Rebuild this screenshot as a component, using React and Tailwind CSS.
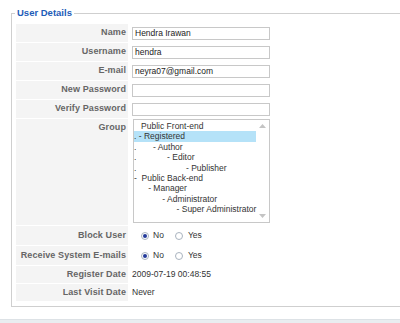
import React from 'react';

const groups = [
    { text: 'Public Front-end', pre: '   ' },
    { text: '- Registered', pre: '. ', active: true },
    { text: '- Author', pre: '.       ' },
    { text: '- Editor', pre: '.             ' },
    { text: '- Publisher', pre: '.                     ' },
    { text: 'Public Back-end', pre: '-  ' },
    { text: '- Manager', pre: '      ' },
    { text: '- Administrator', pre: '            ' },
    { text: '- Super Administrator', pre: '                  ' },
];

function Label({ children, top }) {
    return (
        <div
            className={`w-[112px] shrink-0 bg-[#f4f4f4] pr-[2px] text-right font-bold text-[9px] tracking-[0.1px] text-[#666] flex justify-end ${top ? 'items-start pt-[2px]' : 'items-center'}`}
        >
            {children}
        </div>
    );
}

function TextInput({ value }) {
    return (
        <div className="w-[138px] h-[13px] border border-[#c8c8c8] bg-white px-[2px] text-[8.5px] leading-[11px] text-[#222]">
            {value}
        </div>
    );
}

function Radio({ checked }) {
    return (
        <span className="w-[8px] h-[8px] rounded-full border border-[#a9b3bf] bg-white flex items-center justify-center">
            {checked && <span className="w-[4px] h-[4px] rounded-full bg-[#233a9a]" />}
        </span>
    );
}

function RadioPair() {
    return (
        <div className="flex items-center text-[8.5px] text-[#333] pl-[9px]">
            <Radio checked />
            <span className="ml-[4px]">No</span>
            <span className="ml-[11px]"><Radio /></span>
            <span className="ml-[5px]">Yes</span>
        </div>
    );
}

function Row({ label, h, top, children }) {
    return (
        <div className={`flex ${h}`}>
            <Label top={top}>{label}</Label>
            <div className={`flex pl-[4px] ${top ? 'items-start' : 'items-center'}`}>{children}</div>
        </div>
    );
}

export default function App() {
    return (
        <div className="w-[400px] h-[323px] bg-white overflow-hidden relative" style={{ fontFamily: '"Liberation Sans", Arial, sans-serif' }}>
            <div className="pt-[13px] pl-[11px]">
                {/* Fieldset box */}
                <div className="relative w-[400px] h-[294px] border-l border-t border-b border-[#cfcfcf] pl-[4px] pt-[10px]">
                    <div className="absolute -top-[7px] left-[3px] bg-white px-[2px] text-[9.5px] font-bold leading-[12px] text-[#1d5cb8]">
                        User Details
                    </div>

                    <div className="flex flex-col gap-[1px]">
                        <Row label="Name" h="h-[18px]"><TextInput value="Hendra Irawan" /></Row>
                        <Row label="Username" h="h-[18px]"><TextInput value="hendra" /></Row>
                        <Row label="E-mail" h="h-[18px]"><TextInput value="neyra07@gmail.com" /></Row>
                        <Row label="New Password" h="h-[18px]"><TextInput value="" /></Row>
                        <Row label="Verify Password" h="h-[18px]"><TextInput value="" /></Row>
                        <Row label="Group" h="h-[106px]" top>
                            <div className="ml-[1px] w-[137px] h-[104px] border border-[#c8c8c8] bg-white flex">
                                <div className="flex-1 pt-[1px] text-[8.5px] leading-[10.4px] text-[#333]">
                                    {groups.map((g) => (
                                        <div key={g.text} className={`whitespace-pre w-[122px] ${g.active ? 'bg-[#b5e2f8]' : ''}`}>
                                            {g.pre}{g.text}
                                        </div>
                                    ))}
                                </div>
                                <div className="w-[13px] flex flex-col items-center justify-between py-[4px]">
                                    <svg width="7" height="4" viewBox="0 0 7 4"><path d="M0 4 L3.5 0 L7 4 Z" fill="#c4c4c4" /></svg>
                                    <svg width="7" height="4" viewBox="0 0 7 4"><path d="M0 0 L3.5 4 L7 0 Z" fill="#c4c4c4" /></svg>
                                </div>
                            </div>
                        </Row>
                        <Row label="Block User" h="h-[19px]"><RadioPair /></Row>
                        <Row label="Receive System E-mails" h="h-[19px]"><RadioPair /></Row>
                        <Row label="Register Date" h="h-[17px]">
                            <span className="text-[8.5px] text-[#333]">2009-07-19 00:48:55</span>
                        </Row>
                        <Row label="Last Visit Date" h="h-[17px]">
                            <span className="text-[8.5px] text-[#333]">Never</span>
                        </Row>
                    </div>
                </div>
            </div>

            {/* bottom toolbar edge */}
            <div className="absolute left-0 right-0 top-[319px] h-[4px] bg-[#e9edf0] border-t border-[#dde2e6]" />
        </div>
    );
}
